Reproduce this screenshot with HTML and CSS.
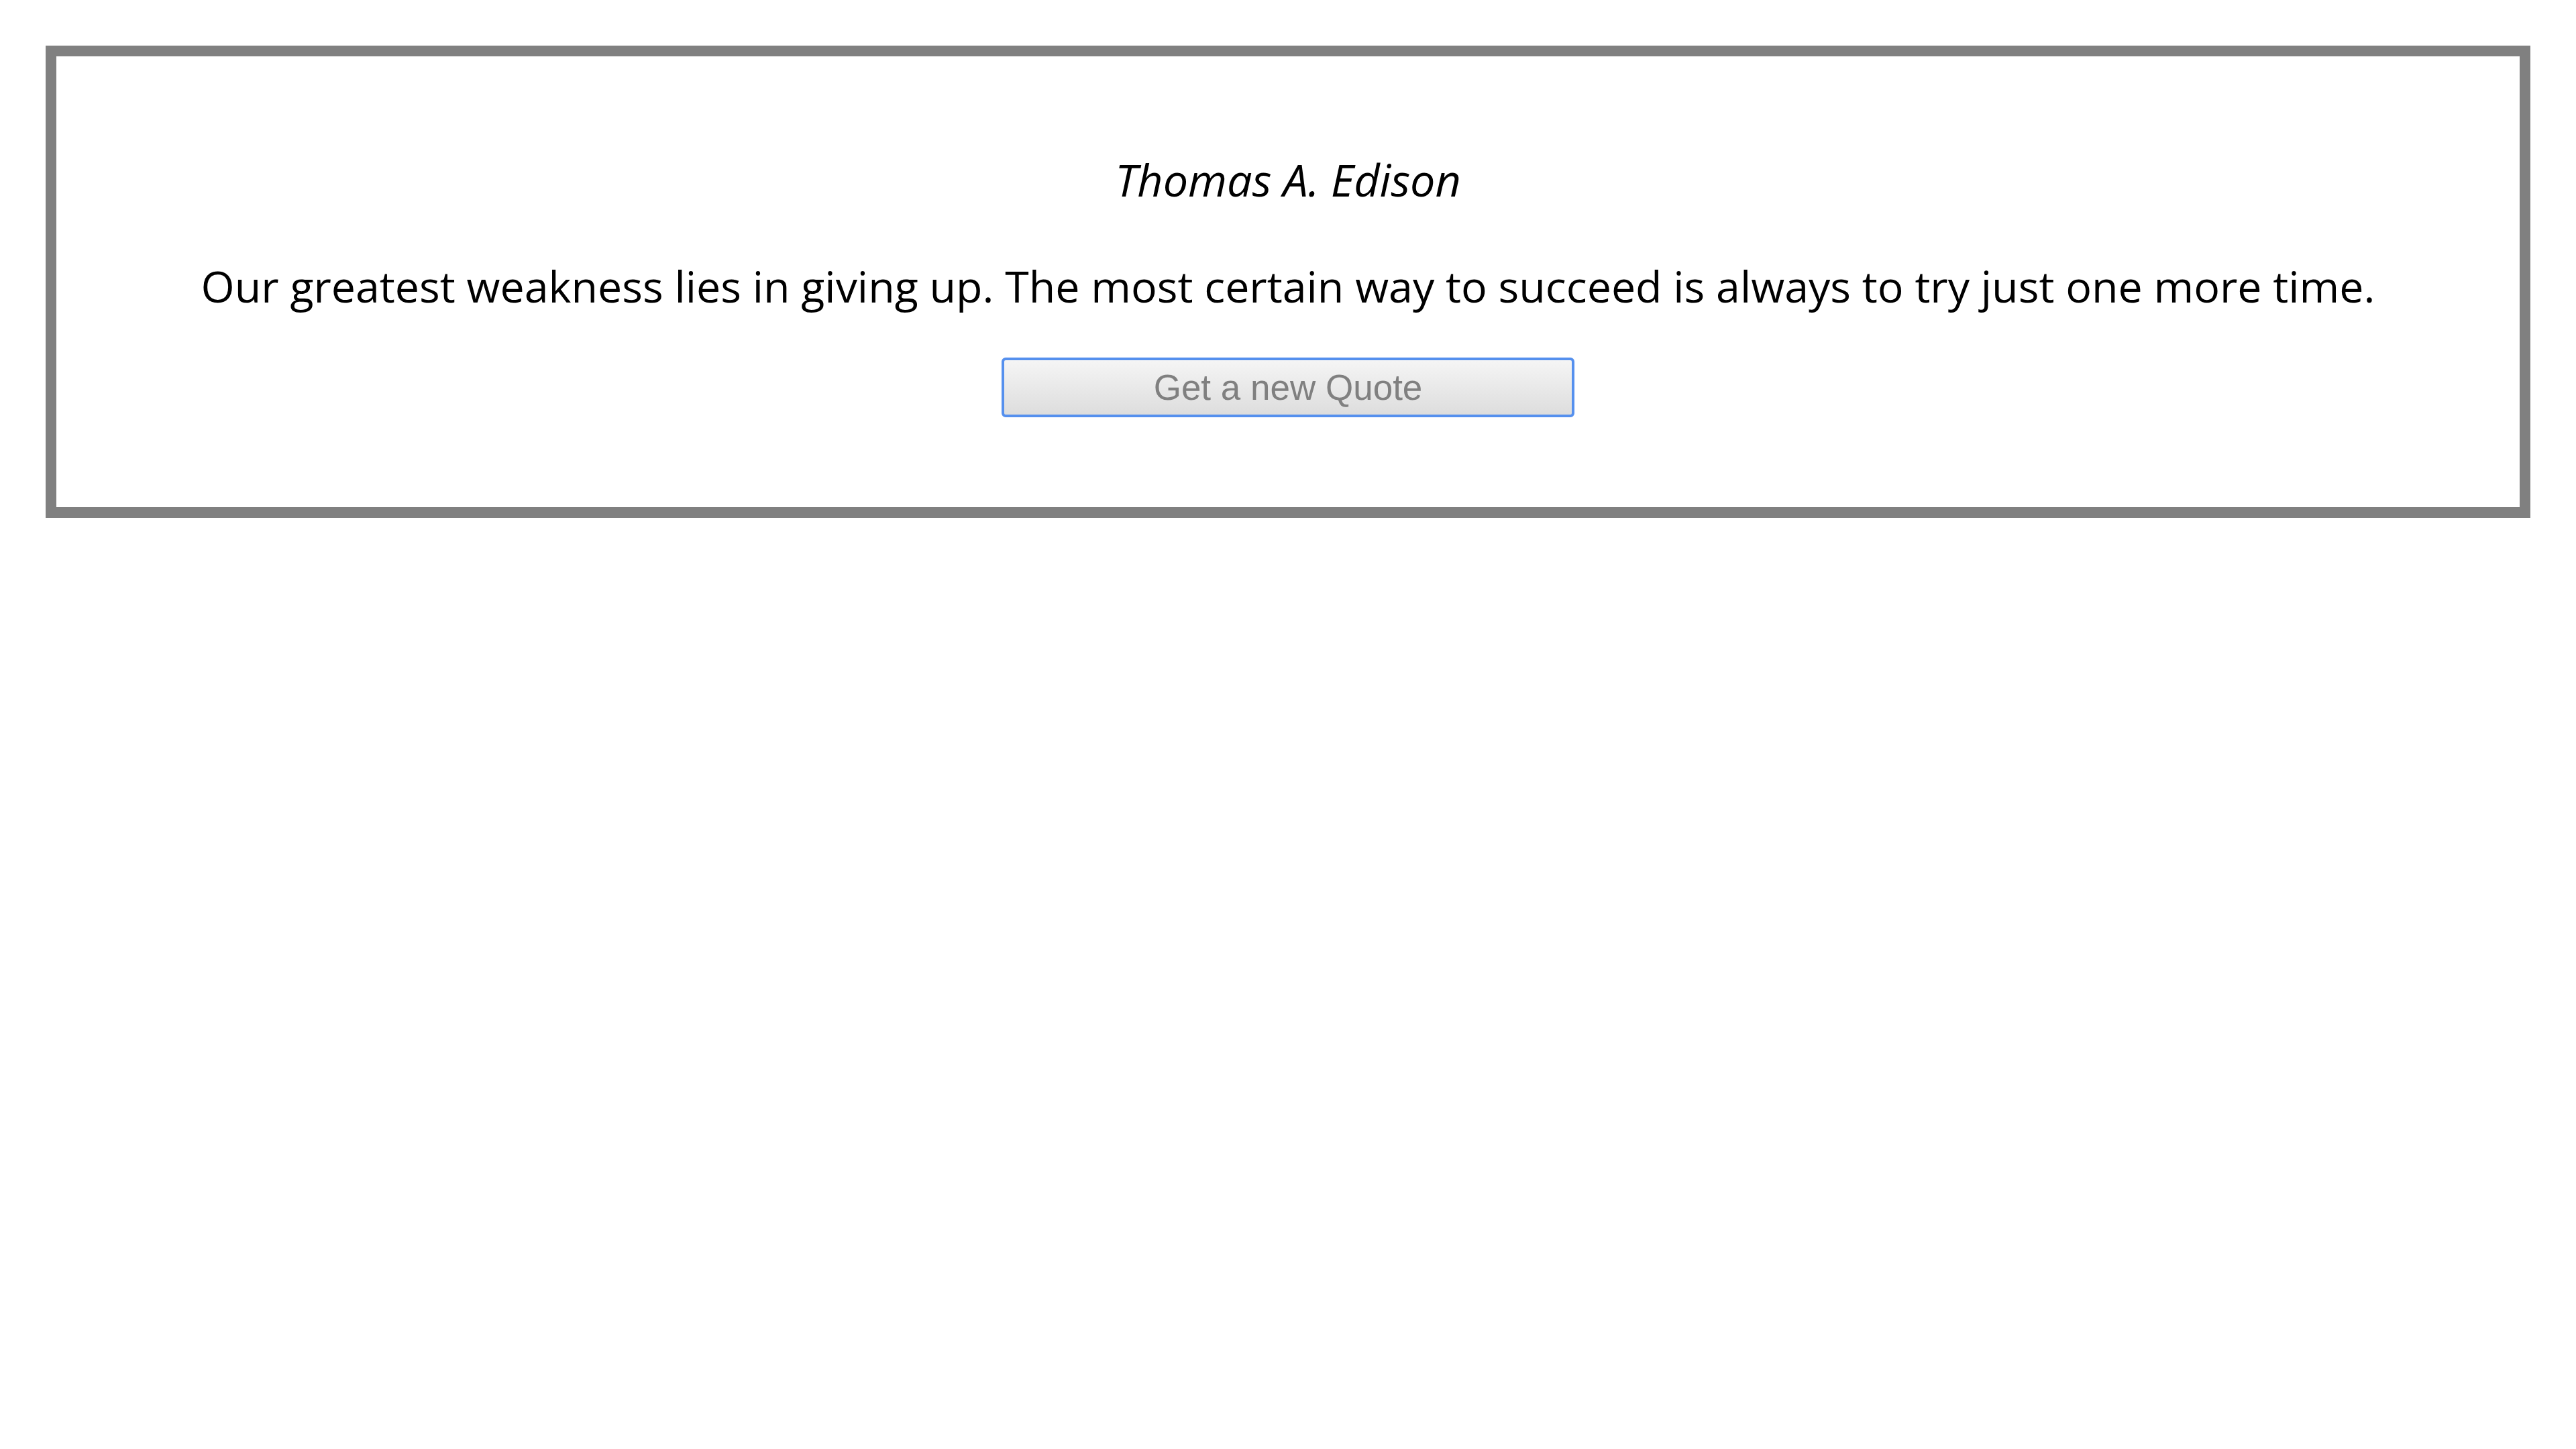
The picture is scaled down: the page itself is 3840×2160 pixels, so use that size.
FILE: index.html
```html
<!DOCTYPE html>
<html lang="en">
<head>
<meta charset="utf-8">
<title>Random Quote</title>
<link rel="stylesheet" href="styles.css">
</head>
<body>
<div class="quote-box">
  <p class="author">Thomas A. Edison</p>
  <p class="quote">Our greatest weakness lies in giving up. The most certain way to succeed is always to try just one more time.</p>
  <button class="new-quote">Get a new Quote</button>
</div>
</body>
</html>
```

FILE: styles.css
```css
html, body {
  margin: 0;
  padding: 0;
  background: #ffffff;
}

body {
  font-family: "Open Sans", "Noto Sans", sans-serif;
  color: #000000;
}

.quote-box {
  margin: 68px;
  border: 16px solid #808080;
  padding: 137px 40px 134px;
  display: flex;
  flex-direction: column;
  align-items: center;
  text-align: center;
}

.author {
  margin: 0;
  font-style: italic;
  font-size: 66.5px;
  line-height: 92px;
}

.quote {
  margin: 67px 0 0;
  font-size: 64.5px;
  line-height: 92px;
}

.new-quote {
  margin-top: 61px;
  width: 854px;
  height: 89px;
  box-sizing: border-box;
  border: 4px solid #5590ee;
  border-radius: 6px;
  background: linear-gradient(#f5f5f5, #dddddd);
  color: #808080;
  font-family: "Liberation Sans", Arial, sans-serif;
  font-size: 53px;
  padding: 0;
}
```
